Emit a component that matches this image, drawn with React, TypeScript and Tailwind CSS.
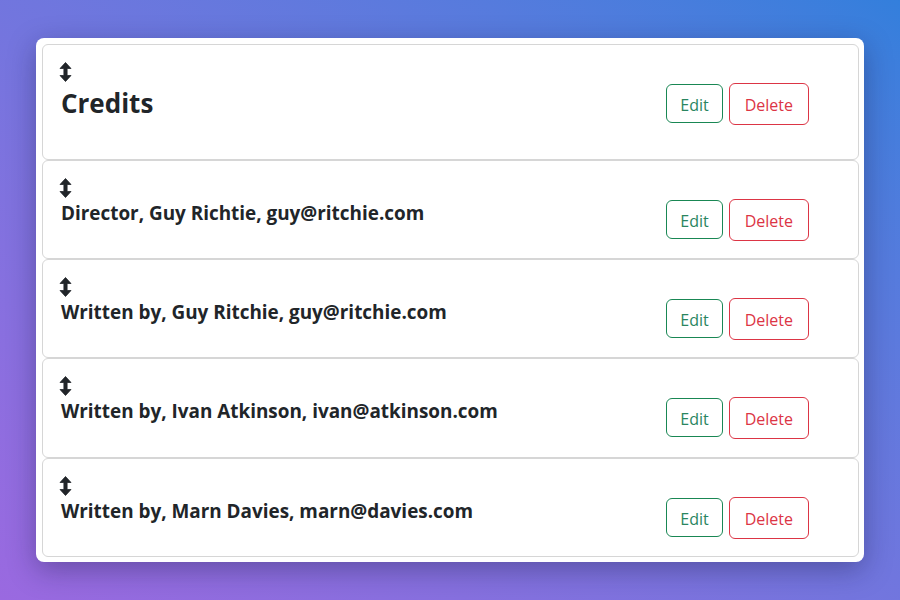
import React from "react";

const rows = [
  "Director, Guy Richtie, guy@ritchie.com",
  "Written by, Guy Ritchie, guy@ritchie.com",
  "Written by, Ivan Atkinson, ivan@atkinson.com",
  "Written by, Marn Davies, marn@davies.com",
];

function Arrow() {
  return (
    <svg width="13" height="20" viewBox="0 0 13 20" className="block">
      <path
        d="M6.5 0.5 L12 6.5 L8.1 6.5 L8.1 13.5 L12 13.5 L6.5 19.5 L1 13.5 L4.9 13.5 L4.9 6.5 L1 6.5 Z"
        fill="#212529"
        stroke="#212529"
        strokeWidth="0.8"
        strokeLinejoin="round"
      />
    </svg>
  );
}

function Buttons() {
  return (
    <div className="flex items-start gap-[6px] mt-[23px] mr-[33px] shrink-0">
      <button className="h-[39px] px-[13px] pt-[2px] border border-[#198754] text-[#2a8560] rounded-[6px] text-[16px] leading-none bg-white">
        Edit
      </button>
      <button className="h-[42px] -mt-[1px] px-[15px] pt-[1px] border border-[#dc3545] text-[#dc3545] rounded-[6px] text-[16px] leading-none bg-white">
        Delete
      </button>
    </div>
  );
}

export default function App() {
  return (
    <div
      className="w-full h-screen flex items-center justify-center bg-linear-to-tr from-[#9a69e0] to-[#337fdc]"
      style={{ fontFamily: '"Open Sans", "Noto Sans", sans-serif' }}
    >
      <div className="w-[828px] bg-white rounded-[8px] shadow-[0_8px_28px_rgba(20,20,60,0.35)] pt-[6px] pb-[5px] pl-[6px] pr-[5px] flex flex-col">
        <div className="h-[116px] border border-[#d6d6d6] rounded-[6px] px-4 pt-4 flex">
          <div className="flex-1 flex flex-col">
            <div className="h-6 pt-[1px]">
              <Arrow />
            </div>
            <div className="ml-[2px] text-[26px] leading-[36px] font-bold text-[#212529]">Credits</div>
          </div>
          <Buttons />
        </div>
        {rows.map((r, i) => (
          <div
            key={i}
            className={`${i === 2 ? "h-[100px]" : "h-[99px]"} border border-[#d6d6d6] rounded-[6px] px-4 pt-4 flex`}
          >
            <div className="flex-1 flex flex-col">
              <div className="h-6 pt-[1px]">
                <Arrow />
              </div>
              <div className="ml-[2px] text-[18.9px] leading-[24px] font-bold text-[#212529]">{r}</div>
            </div>
            <Buttons />
          </div>
        ))}
      </div>
    </div>
  );
}
